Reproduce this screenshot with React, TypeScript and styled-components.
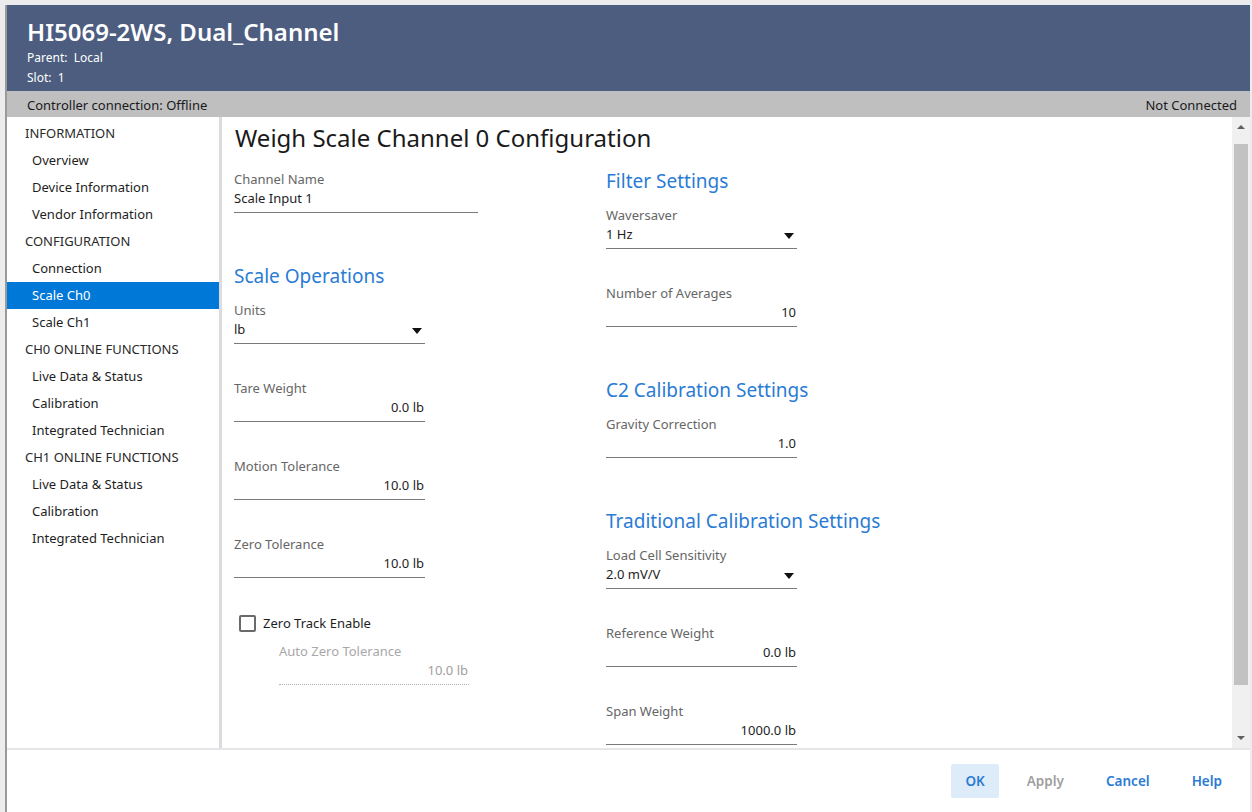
import styled, { createGlobalStyle, css } from "styled-components";

type NavItem = { label: string; header?: boolean; active?: boolean };

const nav: NavItem[] = [
  { label: "INFORMATION", header: true },
  { label: "Overview" },
  { label: "Device Information" },
  { label: "Vendor Information" },
  { label: "CONFIGURATION", header: true },
  { label: "Connection" },
  { label: "Scale Ch0", active: true },
  { label: "Scale Ch1" },
  { label: "CH0 ONLINE FUNCTIONS", header: true },
  { label: "Live Data & Status" },
  { label: "Calibration" },
  { label: "Integrated Technician" },
  { label: "CH1 ONLINE FUNCTIONS", header: true },
  { label: "Live Data & Status" },
  { label: "Calibration" },
  { label: "Integrated Technician" },
];

const GlobalStyle = createGlobalStyle`
  html, body {
    margin: 0;
    padding: 0;
    background: #ececec;
    font-family: "Noto Sans", "Open Sans", Arial, sans-serif;
    font-size: 13px;
    color: #1e1e1e;
  }
`;

const Caret = () => (
  <svg width="10" height="6" viewBox="0 0 10 6">
    <path d="M0 0 H10 L5 6 Z" fill="#111" />
  </svg>
);

type FieldProps = {
  label: string;
  value: string;
  width?: number;
  align?: "left" | "right";
  select?: boolean;
  disabled?: boolean;
};

const Field = ({ label, value, width = 191, align = "right", select, disabled }: FieldProps) => (
  <FieldBox $width={width}>
    <FieldLabel $disabled={disabled}>{label}</FieldLabel>
    <FieldValue $align={select ? "left" : align} $disabled={disabled}>
      <span>{value}</span>
      {select && <Caret />}
    </FieldValue>
  </FieldBox>
);

const App = () => (
  <>
    <GlobalStyle />
    <Window>
      <Header>
        <HeaderTitle>HI5069-2WS, Dual_Channel</HeaderTitle>
        <HeaderMeta>Parent:&nbsp; Local</HeaderMeta>
        <HeaderMeta>Slot:&nbsp; 1</HeaderMeta>
      </Header>

      <StatusBar>
        <span>Controller connection: Offline</span>
        <span>Not Connected</span>
      </StatusBar>

      <Body>
        <Sidebar>
          {nav.map((item, i) =>
            item.header ? (
              <NavHeader key={i}>{item.label}</NavHeader>
            ) : (
              <NavLink key={i} $active={item.active}>
                {item.label}
              </NavLink>
            )
          )}
        </Sidebar>

        <Main>
          <Content>
            <PageTitle>Weigh Scale Channel 0 Configuration</PageTitle>
            <Columns>
              <Column $offset={3}>
                <Field label="Channel Name" value="Scale Input 1" width={244} align="left" />
                <SectionTitle>Scale Operations</SectionTitle>
                <Field label="Units" value="lb" select />
                <Field label="Tare Weight" value="0.0 lb" />
                <Field label="Motion Tolerance" value="10.0 lb" />
                <Field label="Zero Tolerance" value="10.0 lb" />
                <CheckRow>
                  <CheckBox />
                  <span>Zero Track Enable</span>
                </CheckRow>
                <Indented>
                  <Field label="Auto Zero Tolerance" value="10.0 lb" width={190} disabled />
                </Indented>
              </Column>

              <Column>
                <SectionTitle $first>Filter Settings</SectionTitle>
                <Field label="Waversaver" value="1 Hz" select />
                <Field label="Number of Averages" value="10" />
                <SectionTitle>C2 Calibration Settings</SectionTitle>
                <Field label="Gravity Correction" value="1.0" />
                <SectionTitle>Traditional Calibration Settings</SectionTitle>
                <Field label="Load Cell Sensitivity" value="2.0 mV/V" select />
                <Field label="Reference Weight" value="0.0 lb" />
                <Field label="Span Weight" value="1000.0 lb" />
              </Column>
            </Columns>
          </Content>

          <ScrollBar>
            <ScrollArrow $up />
            <ScrollThumb />
            <ScrollArrow $bottom />
          </ScrollBar>
        </Main>
      </Body>

      <Footer>
        <FooterButton $primary>OK</FooterButton>
        <FooterButton $disabled>Apply</FooterButton>
        <FooterButton>Cancel</FooterButton>
        <FooterButton>Help</FooterButton>
      </Footer>
    </Window>
  </>
);

const Window = styled.div`
  margin: 5px 2px 0 5px;
  height: 807px;
  display: flex;
  flex-direction: column;
  background: #fff;
  border-left: 2px solid #9a9a9a;
  overflow: hidden;
`;

const Header = styled.div`
  height: 86px;
  box-sizing: border-box;
  background: #4c5d80;
  color: #fff;
  padding: 13px 20px 0;
`;

const HeaderTitle = styled.div`
  font-size: 24px;
  font-weight: 600;
  line-height: 27px;
  margin-bottom: 3px;
`;

const HeaderMeta = styled.div`
  font-size: 12px;
  line-height: 20px;
`;

const StatusBar = styled.div`
  height: 26px;
  background: #bfbfc0;
  display: flex;
  align-items: center;
  justify-content: space-between;
  padding: 2px 13px 0 20px;
  box-sizing: border-box;
  font-size: 13px;
  color: #1a1a1a;
`;

const Body = styled.div`
  flex: 1;
  display: flex;
  min-height: 0;
`;

const Sidebar = styled.nav`
  width: 212px;
  flex-shrink: 0;
  padding-top: 3px;
  border-right: 3px solid #dcdce0;
`;

const navRow = css`
  height: 27px;
  line-height: 27px;
  white-space: nowrap;
`;

const NavHeader = styled.div`
  ${navRow};
  padding-left: 18px;
  color: #2a2a2a;
`;

const NavLink = styled.div<{ $active?: boolean }>`
  ${navRow};
  padding-left: 25px;
  color: ${(p) => (p.$active ? "#fff" : "#1e1e1e")};
  background: ${(p) => (p.$active ? "#0078d7" : "transparent")};
`;

const Main = styled.div`
  flex: 1;
  display: flex;
  min-width: 0;
`;

const Content = styled.div`
  flex: 1;
  padding: 5px 0 0 12px;
  overflow: hidden;
`;

const PageTitle = styled.h1`
  margin: 0 0 13px 1px;
  font-size: 24px;
  font-weight: 400;
  line-height: 32px;
  color: #1a1a1a;
`;

const Columns = styled.div`
  display: grid;
  grid-template-columns: 372px auto;
  align-items: start;
`;

const Column = styled.div<{ $offset?: number }>`
  display: flex;
  flex-direction: column;
  align-items: flex-start;
  padding-top: ${(p) => p.$offset ?? 0}px;
`;

const SectionTitle = styled.h2<{ $first?: boolean }>`
  margin: ${(p) => (p.$first ? "0" : "14px")} 0 11px;
  font-size: 19px;
  font-weight: 400;
  line-height: 28px;
  color: #2a7bd4;
`;

const FieldBox = styled.div<{ $width: number }>`
  width: ${(p) => p.$width}px;
  margin-bottom: 35px;
`;

const FieldLabel = styled.div<{ $disabled?: boolean }>`
  line-height: 18px;
  color: ${(p) => (p.$disabled ? "#a8a8a8" : "#666")};
`;

const FieldValue = styled.div<{ $align: "left" | "right"; $disabled?: boolean }>`
  display: flex;
  align-items: center;
  justify-content: ${(p) => (p.$align === "right" ? "flex-end" : "space-between")};
  height: 20px;
  padding: 0 1px 4px 0;
  color: ${(p) => (p.$disabled ? "#a0a0a0" : "#1e1e1e")};
  border-bottom: 1px ${(p) => (p.$disabled ? "dotted #b0b0b0" : "solid #7a7a7a")};

  svg {
    margin: 4px 2px 0 0;
  }
`;

const CheckRow = styled.label`
  display: flex;
  align-items: center;
  gap: 7px;
  height: 20px;
  margin-left: 5px;
  color: #1e1e1e;
`;

const CheckBox = styled.span`
  width: 13px;
  height: 13px;
  border: 2px solid #6a6a6a;
  border-radius: 2px;
`;

const Indented = styled.div`
  margin: 9px 0 0 45px;
`;

const ScrollBar = styled.div`
  width: 18px;
  flex-shrink: 0;
  display: flex;
  flex-direction: column;
  align-items: center;
  background: #f0f0f0;
`;

const ScrollArrow = styled.div<{ $up?: boolean; $bottom?: boolean }>`
  height: 20px;
  width: 18px;
  display: flex;
  align-items: center;
  justify-content: center;
  margin-top: ${(p) => (p.$bottom ? "auto" : "0")};

  &::before {
    content: "";
    border-left: 4px solid transparent;
    border-right: 4px solid transparent;
    ${(p) =>
      p.$up ? "border-bottom: 4px solid #606060;" : "border-top: 4px solid #606060;"}
  }
`;

const ScrollThumb = styled.div`
  width: 14px;
  height: 541px;
  margin-top: 7px;
  background: #c2c2c2;
`;

const Footer = styled.div`
  height: 62px;
  flex-shrink: 0;
  display: flex;
  align-items: center;
  justify-content: flex-end;
  gap: 14px;
  padding-right: 14px;
  border-top: 2px solid #e6e6e8;
`;

const FooterButton = styled.button<{ $primary?: boolean; $disabled?: boolean }>`
  height: 34px;
  padding: 0 14px;
  border: none;
  border-radius: 2px;
  font-family: inherit;
  font-size: 13.5px;
  font-weight: 600;
  background: ${(p) => (p.$primary ? "#deecf9" : "transparent")};
  color: ${(p) => (p.$disabled ? "#a0a0a0" : "#2a7bd4")};
`;

export default App;
